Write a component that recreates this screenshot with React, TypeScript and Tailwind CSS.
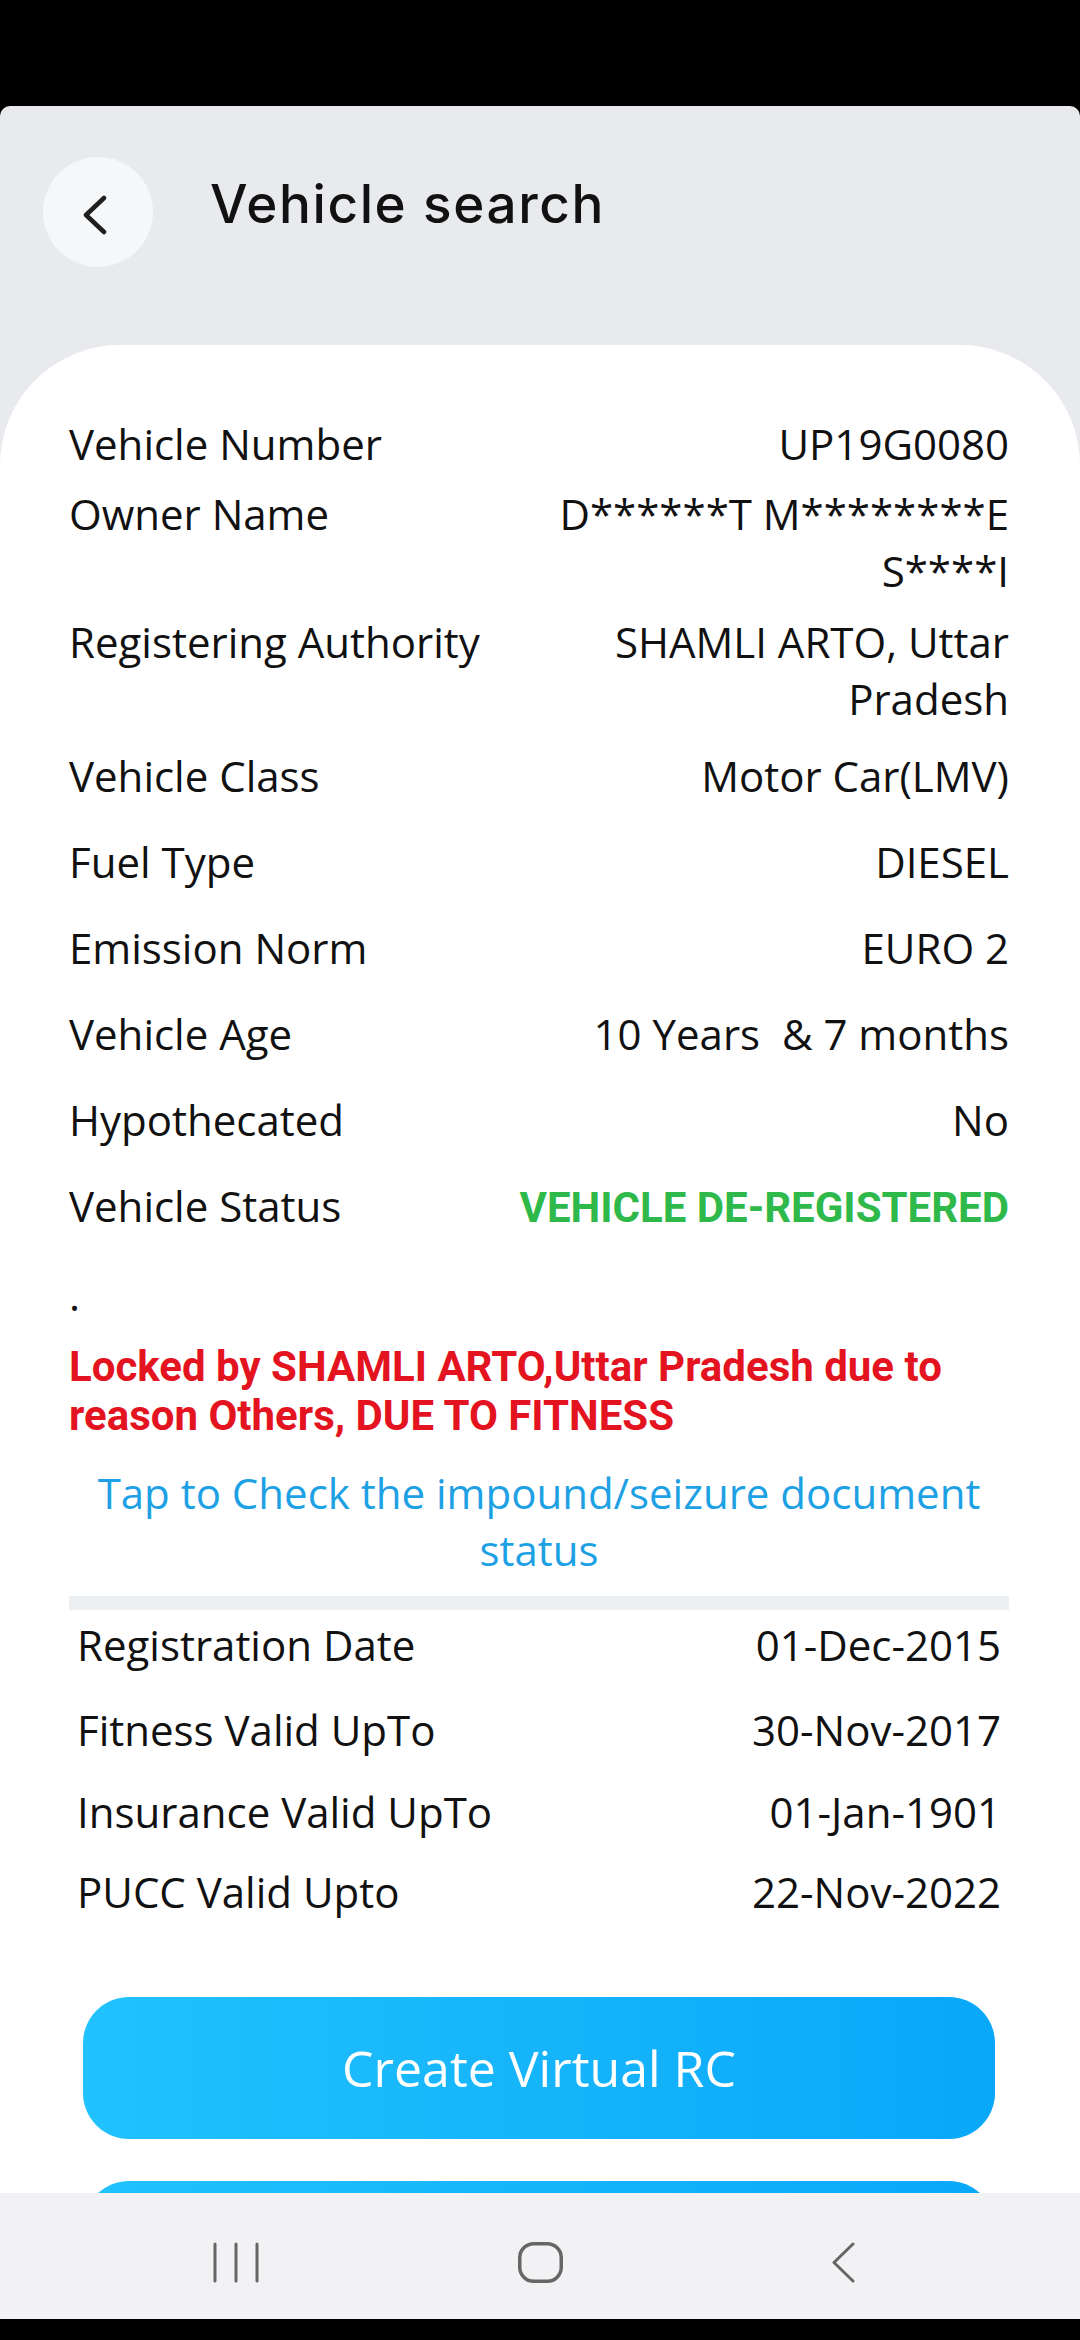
import type { ReactNode } from 'react';

interface InfoRow {
  label: string;
  value: ReactNode;
  gap: string;
  valueClass?: string;
}

const DETAILS: InfoRow[] = [
  { label: 'Vehicle Number', value: 'UP19G0080', gap: 'mt-0' },
  { label: 'Owner Name', value: 'D******T M********E S****I', gap: 'mt-[13px]' },
  { label: 'Registering Authority', value: 'SHAMLI ARTO, Uttar Pradesh', gap: 'mt-[14px]' },
  { label: 'Vehicle Class', value: 'Motor Car(LMV)', gap: 'mt-[20px]' },
  { label: 'Fuel Type', value: 'DIESEL', gap: 'mt-[29px]' },
  { label: 'Emission Norm', value: 'EURO 2', gap: 'mt-[29px]' },
  { label: 'Vehicle Age', value: '10 Years\u00a0 & 7 months', gap: 'mt-[29px]' },
  { label: 'Hypothecated', value: 'No', gap: 'mt-[29px]' },
  {
    label: 'Vehicle Status',
    value: 'VEHICLE DE-REGISTERED',
    gap: 'mt-[29px]',
    valueClass: "font-['Roboto',sans-serif] font-bold text-[#2fb94b]",
  },
];

const VALIDITY: InfoRow[] = [
  { label: 'Registration Date', value: '01-Dec-2015', gap: 'mt-[6px]' },
  { label: 'Fitness Valid UpTo', value: '30-Nov-2017', gap: 'mt-[28px]' },
  { label: 'Insurance Valid UpTo', value: '01-Jan-1901', gap: 'mt-[25px]' },
  { label: 'PUCC Valid Upto', value: '22-Nov-2022', gap: 'mt-[23px]' },
];

function Row({ row, valueWidth }: { row: InfoRow; valueWidth: string }) {
  return (
    <div className={`flex items-baseline justify-between ${row.gap}`}>
      <span className="flex-1">{row.label}</span>
      <span className={`${valueWidth} text-right ${row.valueClass ?? ''}`}>{row.value}</span>
    </div>
  );
}

function NavBar() {
  return (
    <nav className="flex h-[126px] shrink-0 items-start bg-[#f2f2f4] pt-[49px] text-[#666]">
      <svg className="ml-[212px]" width="48" height="41" viewBox="0 0 48 41" fill="none" stroke="currentColor" strokeWidth="3" strokeLinecap="round">
        <path d="M3 2v37M24 2v37M45 2v37" />
      </svg>
      <svg className="ml-[258px]" width="45" height="41" viewBox="0 0 45 41" fill="none" stroke="currentColor" strokeWidth="3.5">
        <rect x="1.75" y="1.75" width="41.5" height="37.5" rx="14" />
      </svg>
      <svg className="ml-[268px]" width="24" height="41" viewBox="0 0 24 41" fill="none" stroke="currentColor" strokeWidth="3" strokeLinecap="round" strokeLinejoin="round">
        <path d="M22 2 3 20.5 22 39" />
      </svg>
    </nav>
  );
}

export default function App() {
  return (
    <div className="flex h-[2340px] w-[1080px] flex-col overflow-hidden bg-black font-['Open_Sans',sans-serif] text-[42px] leading-[57px] text-[#111]">
      <div className="h-[106px] shrink-0" />

      <div className="flex min-h-0 flex-1 flex-col overflow-hidden rounded-t-[10px] bg-[#e8eaed]">
        <header className="flex h-[239px] shrink-0 items-start pl-[43px] pt-[51px]">
          <button className="flex size-[110px] items-center justify-center rounded-full bg-[#f6f7f9]" aria-label="Back">
            <svg width="26" height="40" viewBox="0 0 26 40" fill="none" stroke="#1f1f1f" strokeWidth="4.5" strokeLinecap="round" strokeLinejoin="round" className="-translate-x-[3px] translate-y-[3px]">
              <path d="M22 3 4 20l18 17" />
            </svg>
          </button>
          <h1 className="ml-[57px] mt-[17px] font-['Inter',sans-serif] text-[53px] font-medium leading-[60px] tracking-[1.6px] text-[#111]">
            Vehicle search
          </h1>
        </header>

        <main className="flex-1 rounded-t-[120px] bg-white pl-[69px] pr-[71px] pt-[70px]">
          {DETAILS.map((row) => (
            <Row key={row.label} row={row} valueWidth="w-[490px]" />
          ))}

          <p className="mt-[30px]">.</p>

          <p className="mt-[19px] font-['Roboto',sans-serif] text-[42px] font-bold leading-[49px] text-[#e3141f]">
            Locked by SHAMLI ARTO,Uttar Pradesh due to reason Others, DUE TO FITNESS
          </p>

          <p className="mt-[24px] text-center text-[#1ea1e4]">
            Tap to Check the impound/seizure document status
          </p>

          <div className="mt-[18px] h-[14px] bg-[#ecf0f3]" />

          <div className="px-[8px]">
            {VALIDITY.map((row) => (
              <Row key={row.label} row={row} valueWidth="w-[440px]" />
            ))}
          </div>

          <button className="mx-[14px] mt-[77px] flex h-[142px] w-[912px] items-center justify-center rounded-[46px] bg-gradient-to-r from-[#21c2fd] to-[#09a7f8] text-[50px] text-white">
            Create Virtual RC
          </button>
          <div className="mx-[14px] mt-[42px] h-[142px] rounded-[46px] bg-gradient-to-r from-[#21c2fd] to-[#09a7f8]" />
        </main>
      </div>

      <NavBar />
      <div className="h-[21px] shrink-0" />
    </div>
  );
}
